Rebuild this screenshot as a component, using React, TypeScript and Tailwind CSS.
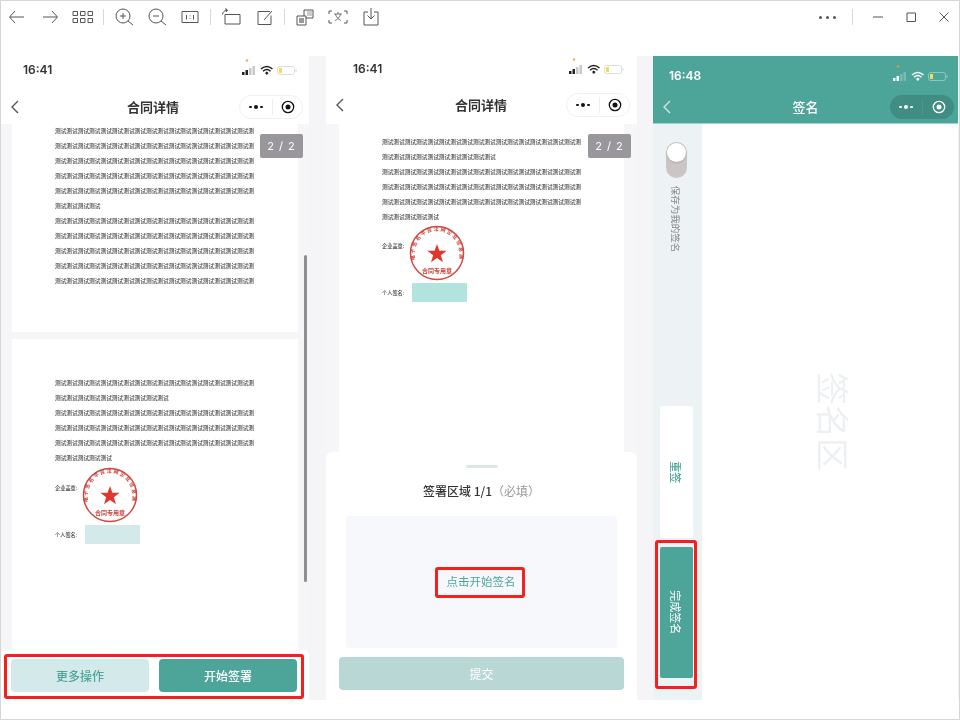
import React from 'react';

const cjk = { fontFamily: '"Noto Sans CJK SC", "Liberation Sans", sans-serif' };

const full = '测试'.repeat(17) + '测';
const short = (n: number) => '测试'.repeat(Math.ceil(n / 2)).slice(0, n);

const ToolIcon: React.FC<{ children: React.ReactNode }> = ({ children }) => (
  <div className="w-[33px] h-[32px] flex items-center justify-center shrink-0">
    <svg width="24" height="24" viewBox="0 0 24 24" fill="none" stroke="#555" strokeWidth="1">
      {children}
    </svg>
  </div>
);

const Sep = () => <div className="w-px h-4 bg-[#d8d8d8] mx-[3.5px] shrink-0" />;

const Toolbar = () => (
  <div className="h-[55px] flex items-start justify-between shrink-0 bg-white">
    <div className="flex items-center -ml-px">
      <ToolIcon><path d="M5 12h14M10 6l-5.500 6 5.500 6" /></ToolIcon>
      <ToolIcon><path d="M5 12h14M14 6l5.500 6-5.500 6" /></ToolIcon>
      <ToolIcon>
        <path d="M2 6.500h4.500v4h-4.500zM9.500 6.500h4.500v4h-4.500zM17 6.500h4.500v4h-4.500zM2 13.500h4.500v4h-4.500zM9.500 13.500h4.500v4h-4.500zM17 13.500h4.500v4h-4.500z" />
      </ToolIcon>
      <Sep />
      <ToolIcon><circle cx="11" cy="11" r="7" /><path d="M16 16l5 4M8 11h6M11 8v6" /></ToolIcon>
      <ToolIcon><circle cx="11" cy="11" r="7" /><path d="M16 16l5 4M8 11h6" /></ToolIcon>
      <ToolIcon>
        <path d="M4 6.500h16v11h-16z" />
        <path d="M8.500 10v4.500M15.500 10v4.500M12 10.500v.8M12 13v.8" />
      </ToolIcon>
      <Sep />
      <ToolIcon>
        <path d="M6 9.500h15v9.500h-15zM3.500 9.500c.5-2.500 2-4 4-4.500" />
        <path d="M6.500 3.500l2 1.500-1.500 2" fill="#555" />
      </ToolIcon>
      <ToolIcon>
        <path d="M18 6.500h-12v13h13v-9M12 15l8-9" />
      </ToolIcon>
      <Sep />
      <ToolIcon>
        <path d="M4 11h9v9h-9zM11 11v-6h9v8h-7" fill="#fff" />
        <rect x="6" y="13" width="5" height="5" fill="#999" stroke="none" />
        <rect x="14" y="6" width="5" height="5" fill="#ccc" stroke="none" />
      </ToolIcon>
      <ToolIcon>
        <path d="M3 9v-3h3M18 6h3v3M21 15v3h-3M6 18h-3v-3" />
        <path d="M8 9h8M12 7v2M9.500 9c.5 3 3 5.500 5.500 6.500M14.500 9c-.5 3-3 5.500-5.500 6.500" strokeWidth=".8" />
      </ToolIcon>
      <ToolIcon>
        <path d="M9 7h-4v13h14v-13h-4M12 3v11M8.500 10.500l3.500 3.500 3.500-3.500" />
      </ToolIcon>
    </div>
    <div className="flex items-center -mr-px">
      <div className="flex gap-[4px] mr-[16px]">
        <span className="w-[3px] h-[3px] rounded-full bg-[#555]" />
        <span className="w-[3px] h-[3px] rounded-full bg-[#555]" />
        <span className="w-[3px] h-[3px] rounded-full bg-[#555]" />
      </div>
      <div className="w-px h-4 bg-[#d8d8d8] mr-[8px]" />
      <ToolIcon><path d="M7 12h10" /></ToolIcon>
      <ToolIcon><path d="M8 8h8.500v8.500h-8.500z" /></ToolIcon>
      <ToolIcon><path d="M7.500 7.500l9 9M16.500 7.500l-9 9" /></ToolIcon>
    </div>
  </div>
);

const StatusIcons: React.FC<{ light?: boolean }> = ({ light }) => {
  const c = light ? '#ffffff' : '#222222';
  return (
    <svg width="56" height="22" viewBox="0 0 56 22" fill="none">
      <circle cx="6" cy="2.500" r="1.300" fill={light ? '#c9a53e' : '#f5b14a'} />
      <rect x="1" y="14" width="2.500" height="3" fill={c} />
      <rect x="4.500" y="12" width="2.500" height="5" fill={c} />
      <rect x="8" y="10" width="2.500" height="7" fill={c} opacity=".25" />
      <rect x="11.500" y="8" width="2.500" height="9" fill={c} opacity=".25" />
      <path d="M20 11c3.500-3 8-3 11.500 0M22 13.200c2.300-2 5.300-2 7.500 0" stroke={c} strokeWidth="1.500" />
      <path d="M24 15l1.800-1.500 1.800 1.500-1.800 2z" fill={c} />
      <rect x="36.500" y="8.500" width="17" height="8" rx="2" stroke={light ? '#8ec7c0' : '#ddd'} />
      <rect x="38" y="10" width="3" height="5" fill="#f5d95c" />
      <rect x="54.500" y="11" width="1" height="3" fill={light ? '#8ec7c0' : '#ddd'} />
    </svg>
  );
};

const Capsule: React.FC<{ dark?: boolean }> = ({ dark }) => {
  const c = dark ? '#ffffff' : '#111111';
  return (
    <div
      className={`w-[64px] h-[24px] rounded-full flex items-center shrink-0 ${
        dark ? 'bg-[#3f8d83]' : 'bg-white border border-[#f0f0f0]'
      }`}
    >
      <div className="w-[32px] flex items-center justify-center gap-[2px]">
        <span className="w-[2.5px] h-[2.5px] rounded-full" style={{ background: c }} />
        <span className="w-[4.500px] h-[4.500px] rounded-full" style={{ background: c }} />
        <span className="w-[2.5px] h-[2.5px] rounded-full" style={{ background: c }} />
      </div>
      <div className={`w-px h-4 ${dark ? 'bg-[#4a998e]' : 'bg-[#eeeeee]'}`} />
      <div className="flex-1 flex items-center justify-center">
        <svg width="14" height="14" viewBox="0 0 14 14" fill="none">
          <circle cx="7" cy="7" r="5.700" stroke={c} strokeWidth="1.300" />
          <circle cx="7" cy="7" r="2.500" fill={c} />
        </svg>
      </div>
    </div>
  );
};

const Header: React.FC<{
  time: string;
  title: string;
  teal?: boolean;
  pl: string;
  pr: string;
  navPr: string;
  statusH: string;
  navMt: string;
  slot: string;
}> = ({ time, title, teal, pl, pr, navPr, statusH, navMt, slot }) => (
  <div className={`h-[68px] shrink-0 ${teal ? 'bg-[#4da59a] text-white border-b border-[#9fd3cd]' : 'bg-white text-[#333]'}`}>
    <div className={`${statusH} flex items-end justify-between ${pl} ${pr}`}>
      <span className="text-[12px] leading-[18px] font-semibold pb-[1px]" style={{ fontFamily: 'Inter, sans-serif' }}>
        {time}
      </span>
      <StatusIcons light={teal} />
    </div>
    <div className={`h-[34px] flex items-center pl-[9px] ${navMt} ${navPr}`}>
      <div className={`${slot} shrink-0`}>
        <svg width="10" height="16" viewBox="0 0 10 16" fill="none">
          <path d="M8 2l-6 6 6 6" stroke={teal ? '#cfe8e4' : '#555'} strokeWidth="1.400" />
        </svg>
      </div>
      <div className={`flex-1 text-center text-[13px] ${teal ? 'font-medium' : 'font-bold'}`} style={cjk}>
        {title}
      </div>
      <Capsule dark={teal} />
    </div>
  </div>
);

const Seal = () => (
  <svg width="58" height="58" viewBox="0 0 58 58" fill="none" className="shrink-0">
    <defs>
      <path id="sealArc" d="M7.500 36a22.500 22.500 0 1 1 43 0" />
    </defs>
    <circle cx="29" cy="29" r="26.500" stroke="#d2483f" strokeWidth="1.500" />
    <text fill="#c9403a" fontSize="5" fontWeight="700" style={{ fontFamily: '"Noto Sans CJK SC", serif' }}>
      <textPath href="#sealArc" textLength="102" lengthAdjust="spacing">电子签名平台法网企业信息测试公司</textPath>
    </text>
    <path d="M29 20l2.400 6.800h7.300l-5.900 4.400 2.200 7-6-4.200-6 4.200 2.200-7-5.900-4.400h7.300z" fill="#e0362c" />
    <text x="29" y="48.500" textAnchor="middle" fill="#c9403a" fontSize="6" fontWeight="700" style={{ fontFamily: '"Noto Sans CJK SC", serif' }}>
      合同专用章
    </text>
  </svg>
);

const TextLine: React.FC<{ text: string }> = ({ text }) => (
  <div className="h-[15px] text-[5.7px] leading-[15px] font-medium text-[#444] whitespace-nowrap" style={cjk}>
    {text}
  </div>
);

const SignBlock: React.FC<{ box: string; lift: string }> = ({ box, lift }) => (
  <div className={`flex flex-col ${lift}`}>
    <div className="flex items-center h-[58px]">
      <span className="w-[26px] -mt-[14px] text-[5.2px] font-medium text-[#444] whitespace-nowrap" style={cjk}>企业盖章:</span>
      <Seal />
    </div>
    <div className="flex items-center h-[19px] mt-[1px]">
      <span className="w-[30px] text-[5.2px] font-medium text-[#444] whitespace-nowrap" style={cjk}>个人签名:</span>
      <div className={`w-[55px] h-[19px] rounded-[1px] ${box}`} />
    </div>
  </div>
);

const PageBadge = () => (
  <div className="absolute z-10 w-[43px] h-[24px] rounded-[2px] bg-[#99979b] text-white text-[11px] flex items-center justify-center tracking-[1px] right-[6px] top-[10px]" style={{ fontFamily: 'Inter, sans-serif' }}>
    2 / 2
  </div>
);

const PhoneOne = () => (
  <div className="w-[308px] flex flex-col shrink-0 relative">
    <Header time="16:41" title="合同详情" pl="pl-[22px]" pr="pr-[12px]" navPr="pr-[6px]" statusH="h-[24px]" navMt="mt-[10px]" slot="w-[57px]" />
    <div className="flex-1 bg-[#f6f6f9] pl-[11px] pr-[11px] flex flex-col gap-[7px] overflow-hidden min-h-0 relative">
      <PageBadge />
      <div className="absolute right-[2px] top-[131px] w-[3px] h-[327px] rounded-full bg-[#8f8f8f]" />
      <div className="h-[208px] shrink-0 bg-white pl-[43px] overflow-hidden">
        <div className="-mt-px">
          {[full, full, full, full, full, short(8), full, full, full, full, full].map((t, i) => (
            <TextLine key={i} text={t} />
          ))}
        </div>
      </div>
      <div className="flex-1 bg-white pl-[43px] pt-[36px]">
        {[full, short(20), full, full, full, short(10)].map((t, i) => (
          <TextLine key={i} text={t} />
        ))}
        <SignBlock box="bg-[#d4eaea]" lift="mt-[1px]" />
      </div>
    </div>
    <div className="h-[50px] bg-white rounded-t-[6px] shrink-0 pl-[3px] pr-[5px] pt-[4px]">
      <div className="h-[45px] border-[3px] border-[#f5201e] rounded-[3px] flex items-center gap-[10px] pl-[4px] pr-[3px] pb-[2px]">
        <div className="w-[138px] h-[33px] rounded-[4px] bg-[#d4eaea] text-[#4da59a] text-[12px] font-medium flex items-center justify-center" style={cjk}>更多操作</div>
        <div className="w-[138px] h-[33px] rounded-[4px] bg-[#4da59a] text-white text-[12px] font-medium flex items-center justify-center" style={cjk}>开始签署</div>
      </div>
    </div>
  </div>
);

const PhoneTwo = () => (
  <div className="w-[311px] ml-[17px] flex flex-col shrink-0 relative">
    <Header time="16:41" title="合同详情" pl="pl-[27px]" pr="pr-[13px]" navPr="pr-[7px]" statusH="h-[23px]" navMt="mt-[9px]" slot="w-[61px]" />
    <div className="flex-1 bg-[#f6f6f9] px-[13px] overflow-hidden min-h-0 relative">
      <PageBadge />
      <div className="h-full bg-white pl-[43px] pt-[10px]">
        {[full, short(20), full, full, full, short(10)].map((t, i) => (
          <TextLine key={i} text={t} />
        ))}
        <SignBlock box="bg-[#b2e3df]" lift="mt-0" />
      </div>
    </div>
    <div className="h-[248px] shrink-0 bg-white rounded-t-[6px] flex flex-col items-center">
      <div className="w-[32px] h-[3px] bg-[#dbe7e6] rounded-full mt-[13px]" />
      <div className="mt-[11px] h-[24px] text-[12px] leading-[24px] font-medium text-[#333]" style={cjk}>
        签署区域 1/1<span className="text-[#999] font-normal">（必填）</span>
      </div>
      <div className="w-[271px] h-[132px] mt-[13px] bg-[#f7f8fc] rounded-[4px] flex items-center justify-center">
        <div className="w-[90px] h-[31px] -ml-[3px] border-[3px] border-[#f5201e] rounded-[3px] text-[#4da59a] text-[11.500px] flex items-center justify-center pl-[2px]" style={cjk}>
          点击开始签名
        </div>
      </div>
      <div className="w-[285px] h-[33px] mt-[9px] bg-[#b8d7d5] rounded-[4px] text-white text-[12px] flex items-center justify-center" style={cjk}>提交</div>
    </div>
  </div>
);

const PhoneThree = () => (
  <div className="w-[305px] ml-[16px] flex flex-col shrink-0">
    <Header time="16:48" title="签名" teal pl="pl-[16px]" pr="pr-[10px]" navPr="pr-[4px]" statusH="h-[30px]" navMt="mt-[4px]" slot="w-[59px]" />
    <div className="flex-1 flex min-h-0">
      <div className="w-[49px] bg-[#edf2f5] flex flex-col items-center shrink-0 pt-[18px] pr-[3px]">
        <div className="w-[21px] h-[36px] rounded-full bg-[#cbc6c3] p-px">
          <div className="w-[19px] h-[19px] rounded-full bg-white shadow" />
        </div>
        <div className="h-[75px] flex items-center justify-center mt-[4px]">
          <span className="rotate-90 text-[9.500px] text-[#888] whitespace-nowrap" style={cjk}>保存为我的签名</span>
        </div>
        <div className="mt-[149px] w-[33px] h-[132px] bg-white rounded-[2px] flex items-center justify-center">
          <span className="rotate-90 text-[11px] font-medium text-[#4da59a] whitespace-nowrap" style={cjk}>重签</span>
        </div>
        <div className="mt-[2px] w-[42px] h-[149px] border-[3px] border-[#f5201e] rounded-[3px] flex justify-center pt-[4px]">
          <div className="w-[33px] h-[131px] bg-[#4da59a] rounded-[2px] flex items-center justify-center">
            <span className="rotate-90 text-[11px] text-white whitespace-nowrap" style={cjk}>完成签名</span>
          </div>
        </div>
      </div>
      <div className="flex-1 bg-white flex justify-center pt-[250px]">
        <span className="rotate-90 h-[33px] text-[33px] leading-[33px] text-[#edf0f2] whitespace-nowrap translate-x-[3px] translate-y-[31px]" style={cjk}>签名区</span>
      </div>
    </div>
  </div>
);

export default function App() {
  return (
    <div className="w-[960px] h-[720px] bg-white border border-[#d6d6d6] flex flex-col overflow-hidden box-border">
      <Toolbar />
      <div className="h-[644px] flex bg-[#f5f5f7] blur-[0.35px] shrink-0">
        <PhoneOne />
        <PhoneTwo />
        <PhoneThree />
      </div>
    </div>
  );
}
